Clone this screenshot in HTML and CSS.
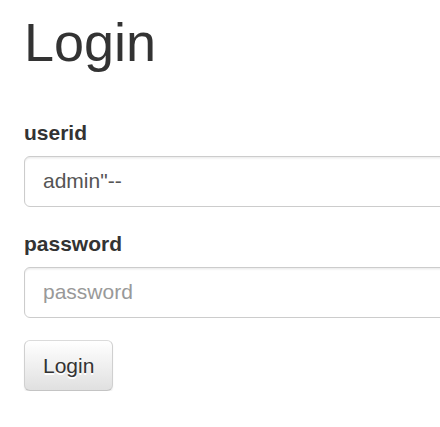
FILE: index.html
```html
<!DOCTYPE html>
<html>
<head>
<meta charset="utf-8">
<link rel="stylesheet" href="styles.css">
</head>
<body>
<div class="page">
  <h1 class="title">Login</h1>
  <form class="login-form">
    <div class="form-group">
      <label class="field-label" for="userid">userid</label>
      <input class="field-input" id="userid" type="text" value='admin"--'>
    </div>
    <div class="form-group">
      <label class="field-label" for="password">password</label>
      <input class="field-input" id="password" type="password" placeholder="password">
    </div>
    <button class="btn" type="button">Login</button>
  </form>
</div>
</body>
</html>
```
FILE: styles.css
```css
html, body {
  margin: 0;
  padding: 0;
  background: #fff;
}
body {
  font-family: "Liberation Sans", Arial, sans-serif;
  font-size: 21px;
  line-height: 30px;
  color: #333;
}
.page {
  padding: 0 0 0 24px;
  overflow: hidden;
}
.title {
  margin: 13px 0 46px;
  font-size: 54px;
  font-weight: 500;
  line-height: 1.1;
  color: #333;
}
.login-form {
  margin: 0;
}
.form-group {
  margin-bottom: 22.5px;
}
.field-label {
  display: inline-block;
  margin-bottom: 7.5px;
  font-weight: bold;
}
.field-input {
  display: block;
  box-sizing: border-box;
  width: calc(100% + 60px);
  height: 51px;
  padding: 9px 18px;
  font-family: inherit;
  font-size: 21px;
  line-height: 30px;
  color: #555;
  background: #fff;
  border: 1.5px solid #ccc;
  border-radius: 6px;
  box-shadow: inset 0 1.5px 1.5px rgba(0, 0, 0, .075);
  outline: none;
}
.field-input::placeholder {
  color: #999;
}
.btn {
  display: inline-block;
  box-sizing: border-box;
  height: 51px;
  padding: 9px 18px;
  font-family: inherit;
  font-size: 21px;
  line-height: 30px;
  color: #333;
  background-image: linear-gradient(to bottom, #fff 0, #e0e0e0 100%);
  border: 1.5px solid #ccc;
  border-color: #dbdbdb #d0d0d0 #c4c4c4;
  border-radius: 6px;
  text-shadow: 0 1.5px 0 #fff;
  box-shadow: inset 0 1.5px 0 rgba(255, 255, 255, .15), 0 1.5px 1.5px rgba(0, 0, 0, .075);
  cursor: pointer;
}
```
